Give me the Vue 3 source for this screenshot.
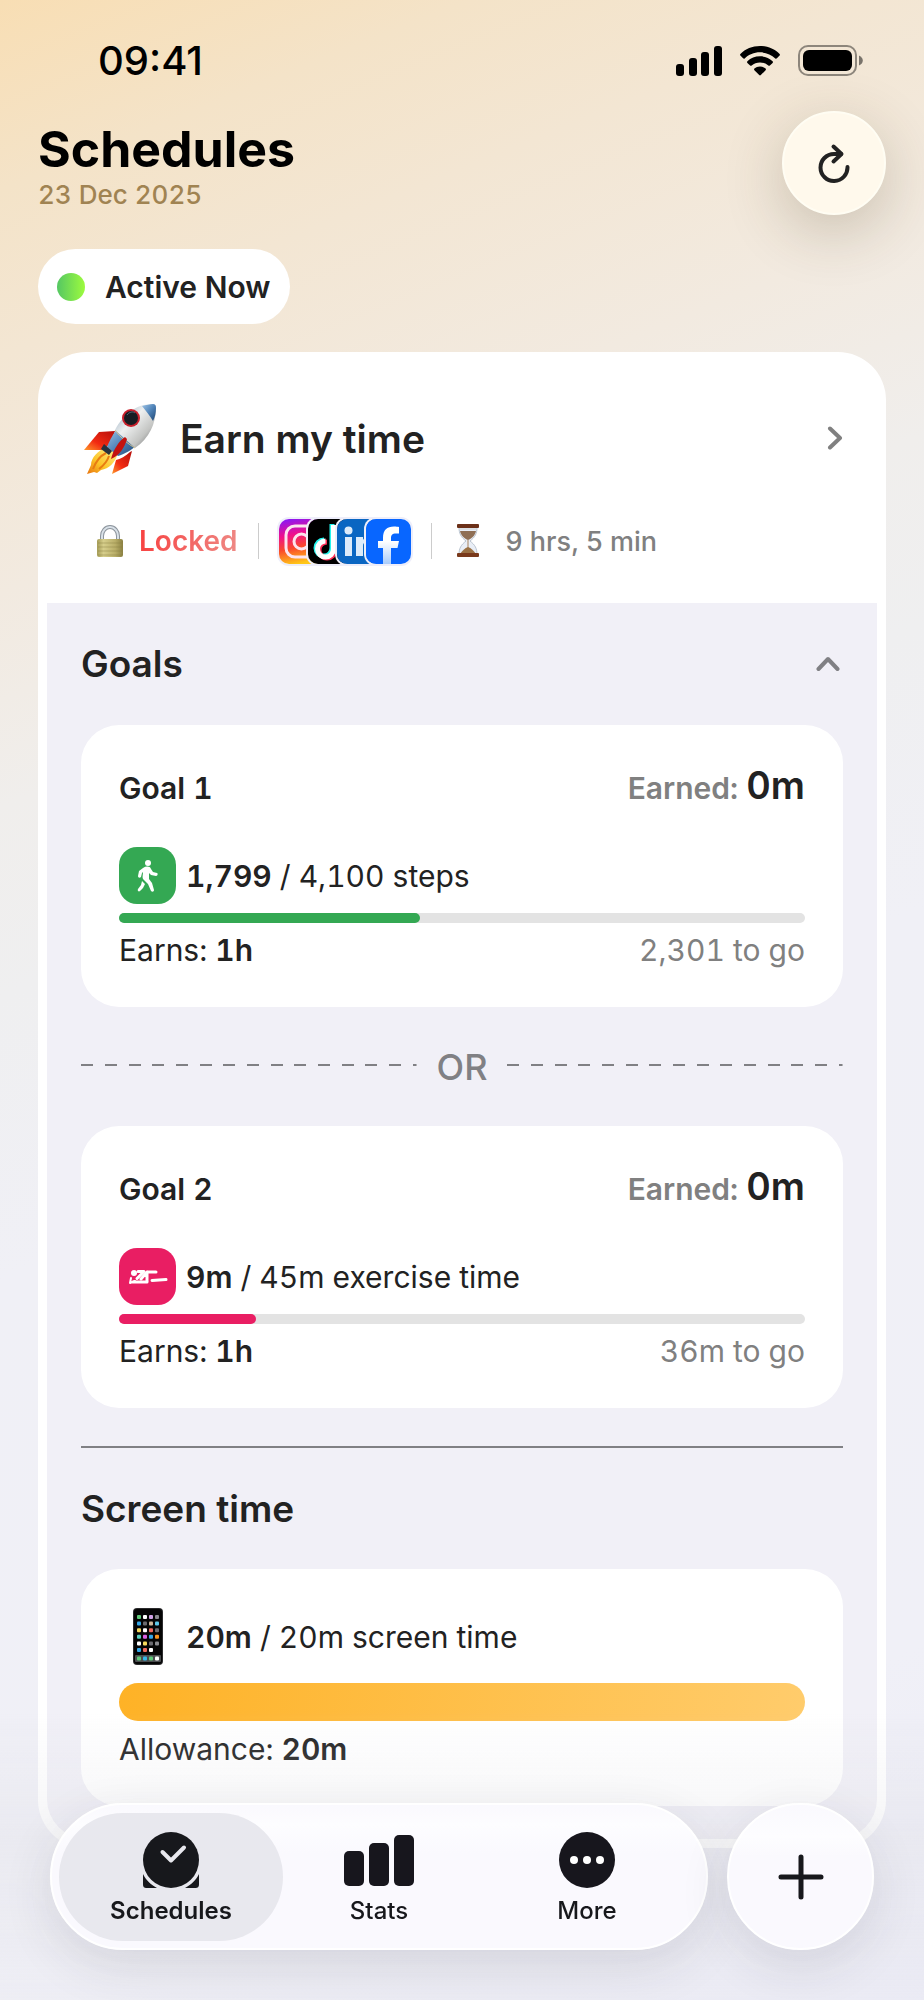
<script setup>
import { ref } from 'vue'

const goalsOpen = ref(true)
const activeTab = ref('Schedules')

const goals = [
  {
    title: 'Goal 1',
    icon: 'walk',
    color: '#34a853',
    current: '1,799',
    target: '4,100 steps',
    percent: 43.9,
    earns: '1h',
    left: '2,301 to go',
    earned: '0m'
  },
  {
    title: 'Goal 2',
    icon: 'exercise',
    color: '#e91e63',
    current: '9m',
    target: '45m exercise time',
    percent: 20,
    earns: '1h',
    left: '36m to go',
    earned: '0m'
  }
]

const tabs = ['Schedules', 'Stats', 'More']

// Home screen of the little phone, row by row
const phoneApps = [
  ['#5fc878', '#ffffff', '#d3a4e8', '#8a8a8e'],
  ['#35a7e8', '#6b6b70', '#cdb79a', '#5ec8e8'],
  ['#f7d95c', '#ffffff', '#ee6a5f', '#6b6b70'],
  ['#5ad0c0', '#d95fe0', '#35a7e8', '#f7931e'],
  ['#ffffff', '#f7d95c', '#6b6b70', '#8a8a8e'],
  ['#35a7e8', '#ee6a5f', '#ffffff']
]
const phoneDock = ['#5fc878', '#35b7e8', '#5fc878', '#ffffff']
</script>

<template>
  <div class="page">
    <div class="status-bar">
      <span class="clock">09:41</span>
      <div class="status-icons">
        <svg width="46" height="30" viewBox="0 0 46 30">
          <rect x="0" y="18" width="8" height="12" rx="3" />
          <rect x="13" y="12" width="8" height="18" rx="3" />
          <rect x="25" y="6" width="8" height="24" rx="3" />
          <rect x="38" y="0" width="8" height="30" rx="3" />
        </svg>
        <svg width="40" height="30" viewBox="0 0 40 30">
          <path d="M20 0C12.300 0 5.300 3 .4 7.900c-.5.500-.5 1.200 0 1.700l2.700 2.700c.5.500 1.200.5 1.600.1C8.600 8.600 14 6.300 20 6.300s11.400 2.300 15.300 6.100c.4.400 1.100.4 1.600-.1l2.700-2.700c.5-.5.5-1.200 0-1.700C34.700 3 27.700 0 20 0z" />
          <path d="M20 10.300c-4.900 0-9.300 1.900-12.600 4.900-.5.500-.5 1.200 0 1.700l2.700 2.600c.4.400 1.100.5 1.600 0 2.200-2 5.100-3.100 8.300-3.100s6.100 1.100 8.300 3.100c.5.500 1.200.4 1.600 0l2.700-2.600c.5-.5.5-1.200 0-1.700-3.300-3-7.700-4.900-12.600-4.900z" />
          <path d="M20 20.500c-2.200 0-4.100.8-5.600 2-.5.500-.5 1.200 0 1.700l4.800 4.900c.4.500 1.200.5 1.600 0l4.800-4.900c.5-.5.5-1.200 0-1.700-1.500-1.200-3.400-2-5.600-2z" />
        </svg>
        <svg width="66" height="32" viewBox="0 0 66 32">
          <rect x="1" y="1" width="57" height="29" rx="9" fill="none" stroke="#000" stroke-opacity=".42" stroke-width="2" />
          <rect x="5" y="5" width="49" height="21" rx="6" />
          <path d="M61 10.500c2.400 1 3.800 3 3.800 5s-1.400 4-3.800 5z" fill-opacity=".5" />
        </svg>
      </div>
    </div>

    <header class="header">
      <div class="heading">
        <h1>Schedules</h1>
        <p class="date">23 Dec 2025</p>
      </div>
      <button class="refresh" aria-label="Refresh">
        <svg width="34" height="40" viewBox="0 0 34 40" fill="none" stroke="#222" stroke-width="4" stroke-linecap="round" stroke-linejoin="round">
          <path d="M30.500 24A13.500 13.500 0 1 1 17 11h7" />
          <path d="M16.500 3.500l8 7.500-8 7.500" />
        </svg>
      </button>
    </header>

    <div class="active-pill">
      <span class="active-dot"></span>
      Active Now
    </div>

    <main class="schedule">
      <div class="schedule-head">
        <button class="schedule-title">
          <svg class="rocket" width="78" height="78" viewBox="0 2 78 78">
            <defs>
              <linearGradient id="hull" x1="0" y1="0" x2="1" y2="1">
                <stop offset="0" stop-color="#7f9bb5" />
                <stop offset=".4" stop-color="#eef0f0" />
                <stop offset=".7" stop-color="#c3c4c2" />
                <stop offset="1" stop-color="#55585c" />
              </linearGradient>
              <linearGradient id="hullBlue" x1="0" y1="0" x2="1" y2="1">
                <stop offset="0" stop-color="#9cc3e6" />
                <stop offset=".5" stop-color="#4f83b8" />
                <stop offset="1" stop-color="#1d4370" />
              </linearGradient>
              <linearGradient id="fin" x1="1" y1="0" x2="0" y2="1">
                <stop offset="0" stop-color="#b50e0a" />
                <stop offset=".6" stop-color="#f22a12" />
                <stop offset="1" stop-color="#ff9a2c" />
              </linearGradient>
              <linearGradient id="flame" x1="1" y1="0" x2="0" y2="1">
                <stop offset="0" stop-color="#fff08a" />
                <stop offset=".6" stop-color="#fcc428" />
                <stop offset="1" stop-color="#e8720c" />
              </linearGradient>
            </defs>
            <path d="M34 34 18 35 3 53l19 0 8-7z" fill="url(#fin)" />
            <path d="M25 51c-8 2-15 10-15 17l-4 9 7-2 3 1 4-3c8-1 14-8 16-14l-4-7z" fill="url(#flame)" />
            <path d="M12 72c3-8 7-13 13-16M18 72c4-3 8-7 10-13" stroke="#e87c12" stroke-width="2" fill="none" />
            <path d="M36 32c-5 6-8 13-10 18l11 9c6-2 14-6 19-11z" fill="url(#hullBlue)" />
            <path d="M34 33C42 17 56 7 71 7c3 0 4 1 4 4 0 15-7 31-21 40z" fill="url(#hull)" />
            <path d="M61 9c4-1 8-2 11-2 2 0 3 1 3 4 0 5-1 9-3 13-3-5-7-10-11-15z" fill="url(#hullBlue)" />
            <path d="M34 33c6 8 13 14 20 18" stroke="#d8c58d" stroke-width="1" fill="none" />
            <circle cx="50" cy="21" r="9" fill="#c8202c" />
            <circle cx="50" cy="21" r="7" fill="#171c22" />
            <path d="M46 18c2-3 6-4 8-2" stroke="#536577" stroke-width="1" fill="none" />
            <path d="M23 47l8 7-3 4-8-6z" fill="#26323e" />
            <path d="M44 40c-6 4-12 13-14 22 8-3 14-12 16-20z" fill="#c3120e" />
            <path d="M49 55c-4 4-10 7-14 8l-4 14 16-8 4-15z" fill="url(#fin)" />
          </svg>
          <span class="schedule-name">Earn my time</span>
          <svg width="16" height="24" viewBox="0 0 16 24" fill="none" stroke="#808080" stroke-width="4" stroke-linecap="round" stroke-linejoin="round">
            <path d="M3 2.500l10 9.500-10 9.500" />
          </svg>
        </button>

        <div class="schedule-meta">
          <svg class="lock" width="34" height="34" viewBox="0 0 34 34">
            <defs>
              <linearGradient id="brass" x1="0" y1="0" x2="1" y2="0">
                <stop offset="0" stop-color="#a59c57" />
                <stop offset=".25" stop-color="#d6ce8b" />
                <stop offset=".7" stop-color="#b9ae68" />
                <stop offset="1" stop-color="#8b8142" />
              </linearGradient>
            </defs>
            <path d="M9 17V12a8 9 0 0 1 16 0v5" fill="none" stroke="#8c949c" stroke-width="4" />
            <path d="M9 17V12a8 9 0 0 1 16 0v5" fill="none" stroke="#d9e1e8" stroke-width="2" />
            <rect x="4" y="15" width="26" height="18" rx="2" fill="url(#brass)" />
            <path d="M5 19h24M5 23h24M5 27h24M5 31h24" stroke="#857b3c" stroke-opacity=".4" />
          </svg>
          <span class="locked">Locked</span>
          <span class="divider"></span>

          <div class="apps">
            <svg viewBox="0 0 45 45">
              <defs>
                <linearGradient id="insta" x1=".2" y1="0" x2=".4" y2="1">
                  <stop offset="0" stop-color="#8a18f5" />
                  <stop offset=".35" stop-color="#f0108c" />
                  <stop offset=".65" stop-color="#fa4a2a" />
                  <stop offset="1" stop-color="#ffc818" />
                </linearGradient>
              </defs>
              <rect width="45" height="45" fill="url(#insta)" />
              <rect x="7" y="7" width="31" height="31" rx="9" fill="none" stroke="#fde4ee" stroke-width="3" />
              <circle cx="22.500" cy="22.500" r="7.500" fill="none" stroke="#fde4ee" stroke-width="3" />
            </svg>
            <svg viewBox="0 0 45 45">
              <rect width="45" height="45" fill="#000" />
              <g fill="none" stroke-width="5">
                <path d="M24 5v24a8 8 0 1 1-8-8M24 6c1 6 5 9 10 9" stroke="#25f4ee" />
                <path d="M27 7v24a8 8 0 1 1-8-8M27 8c1 6 5 9 10 9" stroke="#fe2c55" />
                <path d="M25.500 6v24a8 8 0 1 1-8-8M25.500 7c1 6 5 9 10 9" stroke="#fff" />
              </g>
            </svg>
            <svg viewBox="0 0 45 45">
              <rect width="45" height="45" fill="#0a66c2" />
              <g fill="#dcebfa">
                <circle cx="11.500" cy="11.500" r="4" />
                <rect x="8" y="18" width="7" height="19" />
                <path d="M19 18h7v3c2-5 12-5 12 5v11h-7V27c0-5-5-5-5 0v10h-7z" />
              </g>
            </svg>
            <svg viewBox="0 0 45 45">
              <defs>
                <linearGradient id="fb" x1="0" y1="0" x2="0" y2="1">
                  <stop offset=".4" stop-color="#fff" />
                  <stop offset="1" stop-color="#a9ccfb" />
                </linearGradient>
              </defs>
              <rect width="45" height="45" fill="#0866ff" />
              <path d="M17 45V29h-5v-7h5v-3c0-8 4-11.500 11-11.500 2 0 4 .2 5 .5v6.500h-3c-4 0-5 1.500-5 5V22h8l-1.500 7H25v16z" fill="url(#fb)" />
            </svg>
          </div>

          <span class="divider"></span>
          <svg class="hourglass" width="24" height="34" viewBox="0 0 24 34">
            <path d="M3 3h18c0 7-2 10-7 14 5 4 7 7 7 14H3c0-7 2-10 7-14C5 13 3 10 3 3z" fill="#e9eef6" stroke="#b9c3cf" />
            <path d="M4 7h16c-1 4-3 7-8 9-5-2-7-5-8-9z" fill="#8f6f55" />
            <path d="M12 16v8" stroke="#a8835f" />
            <path d="M4 30c2-3 5-6 8-7 3 1 6 4 8 7z" fill="#9a7145" />
            <rect x="1" y="0" width="22" height="4" rx="1" fill="#6b3018" />
            <rect x="1" y="29" width="22" height="4" rx="1" fill="#7a3a1c" />
            <path d="M4 4h16v2H4z" fill="#dcdfe3" />
          </svg>
          <span class="duration">9 hrs, 5 min</span>
        </div>
      </div>

      <div class="panel">
        <button class="section-toggle" :aria-expanded="goalsOpen" @click="goalsOpen = !goalsOpen">
          <span class="section-title">Goals</span>
          <svg :class="{ closed: !goalsOpen }" width="24" height="16" viewBox="0 0 24 16" fill="none" stroke="#808084" stroke-width="4" stroke-linecap="round" stroke-linejoin="round">
            <path d="M2.500 13l9.500-10 9.500 10" />
          </svg>
        </button>

        <template v-if="goalsOpen">
          <template v-for="(goal, index) in goals" :key="goal.title">
            <div v-if="index > 0" class="or-row">
              <svg class="dashes" height="5"><line x1="0" y1="1" x2="100%" y2="1" stroke="#808084" stroke-width="2" stroke-dasharray="12 12 12 12 12 11" /></svg>
              <span>OR</span>
              <svg class="dashes" height="5"><line x1="0" y1="1" x2="100%" y2="1" stroke="#808084" stroke-width="2" stroke-dasharray="12 12 12 12 12 11" /></svg>
            </div>

            <section class="card">
              <div class="card-head">
                <h3>{{ goal.title }}</h3>
                <div class="earned">Earned: <strong>{{ goal.earned }}</strong></div>
              </div>
              <div class="metric">
                <span class="metric-icon" :style="{ background: goal.color }">
                  <svg v-if="goal.icon === 'walk'" width="57" height="57" viewBox="0 0 57 57" fill="#fff">
                    <circle cx="29" cy="16" r="3" />
                    <path d="M24 21c3-2 7-2 8 1l2 3 4 1c1 0 1 3-1 3l-5-1-2-2v6l3 4 2 7c0 2-2 2-3 1l-3-7-5-5c-1-2 0-4 0-7l-1 1-1 4c-1 1-3 1-3-1l1-5z" />
                    <path d="M23 34l3 3-2 4-3 3c-1 1-3 0-2-2l3-4z" />
                  </svg>
                  <svg v-else width="57" height="57" viewBox="0 0 57 57" fill="none" stroke="#fff" stroke-linecap="round" stroke-linejoin="round">
                    <circle cx="15" cy="25" r="3" fill="#fff" stroke="none" />
                    <path d="M12 30l-1 5 5-2" stroke-width="2" />
                    <path d="M19 23.500h6l-7 7M14 34h14" stroke-width="3" />
                    <path d="M22 31l6-7v9M28 24h9" stroke-width="3" />
                    <path d="M33 32.500l14-1" stroke-width="3" />
                  </svg>
                </span>
                <span><strong>{{ goal.current }}</strong> / {{ goal.target }}</span>
              </div>
              <div class="track" role="progressbar" :aria-label="goal.title" :aria-valuenow="goal.percent">
                <div class="fill" :style="{ width: goal.percent + '%', background: goal.color }"></div>
              </div>
              <div class="card-foot">
                <span>Earns: <strong>{{ goal.earns }}</strong></span>
                <span class="muted">{{ goal.left }}</span>
              </div>
            </section>
          </template>
        </template>

        <hr class="rule">

        <h2 class="section-title">Screen time</h2>
        <section class="card card-screen">
          <div class="metric">
            <svg width="57" height="57" viewBox="0 0 57 57">
              <rect x="14" y="0" width="30" height="57" rx="4" fill="#2b2b2d" />
              <rect x="15" y="1" width="28" height="55" rx="3" fill="#050505" />
              <rect x="16" y="47" width="26" height="7" rx="1" fill="#4a4d4f" />
              <template v-for="(row, r) in phoneApps" :key="r">
                <rect v-for="(color, c) in row" :key="c" :x="18 + c * 6" :y="7 + r * 6.600" width="4" height="4" rx="1" :fill="color" />
              </template>
              <rect v-for="(color, c) in phoneDock" :key="'dock' + c" :x="18 + c * 6" y="48.500" width="4" height="4" rx="1" :fill="color" />
            </svg>
            <span><strong>20m</strong> / 20m screen time</span>
          </div>
          <div class="allowance-bar" role="progressbar" aria-label="Screen time" aria-valuenow="100"></div>
          <div class="card-foot">
            <span>Allowance: <strong>20m</strong></span>
          </div>
        </section>
      </div>
    </main>

    <div class="bottom">
      <nav class="tabs">
        <button v-for="tab in tabs" :key="tab" class="tab" :class="{ active: tab === activeTab }" @click="activeTab = tab">
          <svg v-if="tab === 'Schedules'" width="56" height="56" viewBox="0 0 56 56" fill="#17181c">
            <path d="M0 42c3 6 7 10 14 14H4c-3 0-4-1-4-4zM56 42c-3 6-7 10-14 14h10c3 0 4-1 4-4z" />
            <circle cx="28" cy="28" r="28" />
            <path d="M19.500 20l8.500 8.500L41 15.500" fill="none" stroke="#e8e8ee" stroke-width="4" stroke-linecap="round" stroke-linejoin="round" />
          </svg>
          <svg v-else-if="tab === 'Stats'" width="70" height="56" viewBox="0 0 70 56" fill="#17161d">
            <rect x="0" y="19" width="20" height="35" rx="5" />
            <rect x="25" y="11" width="20" height="43" rx="5" />
            <rect x="50" y="3" width="20" height="51" rx="5" />
          </svg>
          <svg v-else width="56" height="56" viewBox="0 0 56 56">
            <circle cx="28" cy="28" r="28" fill="#17161d" />
            <circle cx="15" cy="28" r="4" fill="#fff" />
            <circle cx="28" cy="28" r="4" fill="#fff" />
            <circle cx="41" cy="28" r="4" fill="#fff" />
          </svg>
          <span>{{ tab }}</span>
        </button>
      </nav>
      <button class="add" aria-label="Add schedule">
        <svg width="46" height="46" viewBox="0 0 46 46" stroke="#17181c" stroke-width="5" stroke-linecap="round">
          <path d="M23 3v40M3 23h40" />
        </svg>
      </button>
    </div>
  </div>
</template>

<style>
body {
  margin: 0;
}
</style>

<style scoped>
.page {
  box-sizing: border-box;
  min-height: 100vh;
  padding: 0 38px 152px;
  font-family: Inter, "Liberation Sans", sans-serif;
  color: #222;
  background: linear-gradient(158deg, #f8deb4 0%, #f4e3c8 8%, #f3e6d3 15%, #f2eae0 25%, #f0eeec 34%, #efeff0 42%, #f0f0f6 54%, #f0f0f7 85%, #ececf6 100%);
}

button {
  margin: 0;
  padding: 0;
  border: none;
  background: none;
  font: inherit;
  color: inherit;
  cursor: pointer;
}

h1,
h2,
h3,
p {
  margin: 0;
}

svg {
  display: block;
  flex: none;
}

strong {
  font-weight: 600;
}

.status-bar {
  display: flex;
  align-items: center;
  justify-content: space-between;
  height: 48px;
  padding: 37px 22px 26px 60px;
}

.clock {
  font-size: 40px;
  font-weight: 500;
  line-height: 48px;
  color: #000;
}

.status-icons {
  display: flex;
  align-items: center;
  gap: 18px;
}

.header {
  display: flex;
  align-items: center;
  justify-content: space-between;
  margin-bottom: 34px;
}

.heading {
  padding-top: 4px;
}

h1 {
  font-size: 50px;
  font-weight: 700;
  line-height: 60px;
  color: #000;
}

.date {
  font-size: 26px;
  font-weight: 500;
  font-variant-numeric: tabular-nums;
  line-height: 32px;
  color: #a08352;
}

.refresh {
  display: grid;
  place-items: center;
  box-sizing: border-box;
  width: 104px;
  height: 104px;
  border: 2px solid #fffdf3;
  border-radius: 50%;
  background: #fff9ec;
  box-shadow: 0 16px 60px rgba(70, 60, 30, 0.24);
}

.active-pill {
  display: flex;
  align-items: center;
  gap: 20px;
  width: fit-content;
  height: 75px;
  margin-bottom: 28px;
  padding: 0 20px 0 19px;
  border-radius: 38px;
  background: #fff;
  font-size: 30px;
  font-weight: 600;
}

.active-dot {
  width: 28px;
  height: 28px;
  border-radius: 50%;
  background: linear-gradient(90deg, #55c763, #9dfb3e);
}

.schedule {
  padding: 0 9px 9px;
  border-radius: 48px;
  background: #fff;
}

.schedule-head {
  display: flex;
  flex-direction: column;
  gap: 35px;
  padding: 42px 34px 38px;
}

.schedule-title {
  display: flex;
  align-items: center;
  gap: 21px;
  height: 88px;
  text-align: left;
}

.schedule-name {
  flex: 1;
  font-size: 39px;
  font-weight: 600;
}

.schedule-meta {
  display: flex;
  align-items: center;
  height: 48px;
  padding-left: 12px;
}

.locked {
  margin-left: 12px;
  font-size: 28px;
  font-weight: 600;
  color: transparent;
  background: linear-gradient(100deg, #f8403f, #ee8a86);
  background-clip: text;
}

.divider {
  width: 1px;
  height: 36px;
  margin: 0 20px;
  background: #ccc;
}

.apps {
  display: flex;
}

.apps svg {
  box-sizing: content-box;
  width: 45px;
  height: 45px;
  border-radius: 10px;
  box-shadow: 0 0 0 2px #eeeefa;
}

.apps svg + svg {
  margin-left: -16px;
}

.hourglass {
  margin: 0 26px 0 4px;
}

.duration {
  font-size: 27px;
  font-weight: 500;
  color: #808080;
}

.panel {
  padding: 33px 34px;
  border-radius: 0 0 40px 40px;
  background: #f1f0f7;
}

.section-toggle {
  display: flex;
  align-items: center;
  justify-content: space-between;
  width: 100%;
  margin-bottom: 33px;
  padding-right: 3px;
  box-sizing: border-box;
}

.closed {
  transform: rotate(180deg);
}

.section-title {
  font-size: 37px;
  font-weight: 600;
  line-height: 56px;
}

h2.section-title {
  margin-bottom: 32px;
}

.card {
  padding: 36px 38px 39px;
  border-radius: 38px;
  background: #fff;
  font-size: 30px;
  font-variant-numeric: tabular-nums;
}

.card-head {
  display: flex;
  align-items: baseline;
  justify-content: space-between;
  height: 48px;
  margin-bottom: 38px;
  line-height: 48px;
}

h3 {
  font-size: 30px;
  font-weight: 600;
}

.earned {
  font-size: 30px;
  font-weight: 600;
  color: #808080;
}

.earned strong {
  font-size: 38px;
  color: #222;
}

.metric {
  display: flex;
  align-items: center;
  gap: 10px;
  height: 57px;
}

.metric-icon {
  border-radius: 18px;
}

.track {
  height: 10px;
  margin: 9px 0;
  border-radius: 5px;
  background: #e3e3e3;
}

.fill {
  height: 100%;
  border-radius: 5px;
}

.card-foot {
  display: flex;
  justify-content: space-between;
  line-height: 36px;
}

.muted {
  color: #808080;
}

.or-row {
  display: flex;
  align-items: center;
  gap: 20px;
  height: 119px;
  font-size: 36px;
  font-weight: 500;
  color: #808084;
}

.dashes {
  flex: 1;
  min-width: 0;
}

.rule {
  height: 2px;
  margin: 38px 0 33px;
  border: none;
  background: #808084;
}

.card-screen {
  padding-top: 39px;
}

.allowance-bar {
  height: 38px;
  margin: 18px 0 10px;
  border-radius: 19px;
  background: linear-gradient(100deg, #feb226, #ffcc6c);
}

/* Floating bar over the end of the list */
.bottom {
  position: fixed;
  right: 0;
  bottom: 0;
  left: 0;
  display: flex;
  gap: 19px;
  padding: 93px 50px 50px;
  background: linear-gradient(rgba(222, 222, 228, 0), rgba(222, 222, 228, 0.3) 45%, rgba(222, 222, 228, 0.1));
}

.tabs {
  display: flex;
  flex: 1;
  box-sizing: border-box;
  height: 147px;
  padding: 8px 15px 7px;
  border: 2px solid #fff;
  border-radius: 74px;
  background: linear-gradient(#faf9fe, #fdfdff 14%, #faf9fe 34%);
  box-shadow: 0 16px 50px rgba(40, 40, 60, 0.12);
}

.tab {
  display: flex;
  flex: 1;
  flex-direction: column;
  align-items: center;
  gap: 8px;
  height: 128px;
  padding-top: 19px;
  box-sizing: border-box;
  border-radius: 64px;
  font-size: 24px;
  font-weight: 500;
  line-height: 30px;
  color: #17181c;
}

.tab.active {
  margin: 0 -8px;
  padding-right: 8px;
  padding-left: 8px;
  background: #e8e8ee;
  font-weight: 600;
}

.add {
  display: grid;
  flex: none;
  place-items: center;
  box-sizing: border-box;
  width: 147px;
  height: 147px;
  border: 2px solid #fff;
  border-radius: 50%;
  background: linear-gradient(#faf9fe, #fdfdff 22%, #faf9fe 36%);
  box-shadow: 0 16px 50px rgba(40, 40, 60, 0.12);
}
</style>
